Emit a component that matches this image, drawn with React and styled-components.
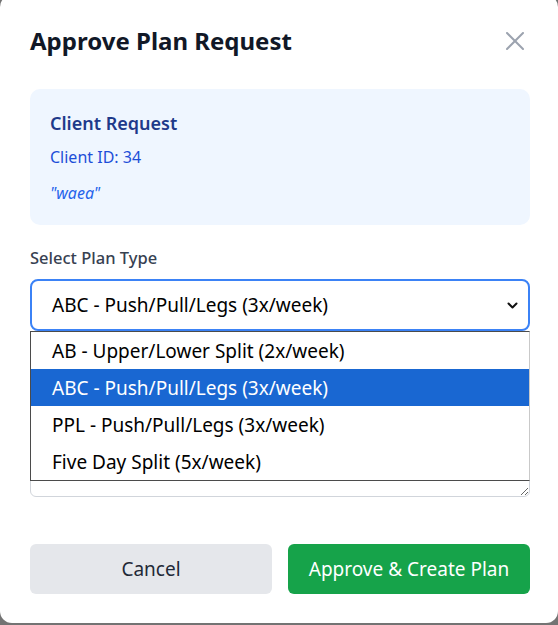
import React from 'react';
import styled, { createGlobalStyle } from 'styled-components';

const planOptions = [
  'AB - Upper/Lower Split (2x/week)',
  'ABC - Push/Pull/Legs (3x/week)',
  'PPL - Push/Pull/Legs (3x/week)',
  'Five Day Split (5x/week)',
];

function App() {
  const selected = planOptions[1];
  return (
    <>
      <GlobalStyle />
      <Overlay>
        <Modal>
          <Header>
            <Title>Approve Plan Request</Title>
            <CloseButton aria-label="Close">
              <svg width="18" height="18" viewBox="0 0 18 18" fill="none">
                <path d="M1 1L17 17M17 1L1 17" stroke="#9ca3af" strokeWidth="2" strokeLinecap="round" />
              </svg>
            </CloseButton>
          </Header>

          <InfoBox>
            <InfoTitle>Client Request</InfoTitle>
            <InfoLine>Client ID: 34</InfoLine>
            <Quote>"waea"</Quote>
          </InfoBox>

          <Field>
            <Label>Select Plan Type</Label>
            <SelectWrap>
              <SelectBox>
                <span>{selected}</span>
                <svg width="11" height="7" viewBox="0 0 11 7" fill="none">
                  <path d="M1.5 1.5L5.5 5.5L9.5 1.5" stroke="#111" strokeWidth="2" strokeLinecap="round" strokeLinejoin="round" />
                </svg>
              </SelectBox>
              <Listbox>
                {planOptions.map((opt) => (
                  <Option key={opt} $active={opt === selected}>
                    {opt}
                  </Option>
                ))}
              </Listbox>
            </SelectWrap>
          </Field>

          <Notes aria-label="Notes" />

          <Footer>
            <Button>Cancel</Button>
            <Button $primary>Approve &amp; Create Plan</Button>
          </Footer>
        </Modal>
      </Overlay>
    </>
  );
}

export default App;

const GlobalStyle = createGlobalStyle`
  html, body {
    margin: 0;
    padding: 0;
    background: #737373;
    overflow: hidden;
  }
  * {
    box-sizing: border-box;
  }
  body {
    font-family: "Noto Sans", "Open Sans", sans-serif;
  }
`;

const Overlay = styled.div`
  width: 558px;
  height: 625px;
  overflow: hidden;
`;

const Modal = styled.div`
  margin-top: -5px;
  width: 558px;
  height: 628px;
  background: #fff;
  border-radius: 12px;
  padding: 30px 28px 29px 30px;
`;

const Header = styled.div`
  display: flex;
  justify-content: space-between;
  align-items: center;
  margin-bottom: 32px;
`;

const Title = styled.h2`
  margin: 0;
  font-size: 24px;
  line-height: 32px;
  font-weight: 700;
  color: #111827;
`;

const CloseButton = styled.button`
  border: none;
  background: none;
  padding: 0;
  margin-right: 6px;
  display: flex;
`;

const InfoBox = styled.div`
  background: #eff6ff;
  border-radius: 10px;
  padding: 20px;
  margin-bottom: 21px;
`;

const InfoTitle = styled.h3`
  margin: 0 0 8px;
  font-size: 18px;
  line-height: 28px;
  font-weight: 600;
  color: #1e3a8a;
`;

const InfoLine = styled.p`
  margin: 0;
  font-size: 16px;
  line-height: 24px;
  color: #1d4ed8;
`;

const Quote = styled.p`
  margin: 12px 0 0;
  font-size: 16px;
  line-height: 24px;
  font-style: italic;
  color: #2563eb;
`;

const Field = styled.div`
  margin-bottom: 20px;
`;

const Label = styled.label`
  display: block;
  font-size: 16.5px;
  line-height: 24px;
  font-weight: 500;
  color: #374151;
  margin-bottom: 9px;
`;

const SelectWrap = styled.div`
  position: relative;
`;

const SelectBox = styled.div`
  display: flex;
  align-items: center;
  justify-content: space-between;
  height: 52px;
  padding: 0 10px 0 20px;
  border: 2px solid #3b82f6;
  border-radius: 8px;
  font-size: 19px;
  color: #000;
`;

const Listbox = styled.div`
  position: absolute;
  top: 100%;
  left: 0;
  right: 0;
  z-index: 2;
  background: #fff;
  border: 1px solid #4b4b4b;
  border-right-color: #c9c9c9;
`;

const Option = styled.div`
  height: 37px;
  display: flex;
  align-items: center;
  padding-left: 21px;
  font-size: 19px;
  color: ${(p) => (p.$active ? '#fff' : '#000')};
  background: ${(p) => (p.$active ? '#1967d2' : 'transparent')};
`;

const Notes = styled.textarea`
  display: block;
  width: 100%;
  height: 116px;
  margin-top: 50px;
  border: 1px solid #d1d5db;
  border-radius: 6px;
  resize: vertical;
  font-family: inherit;
`;

const Footer = styled.div`
  display: grid;
  grid-template-columns: 1fr 1fr;
  gap: 16px;
  margin-top: 47px;
`;

const Button = styled.button`
  height: 50px;
  border: none;
  border-radius: 6px;
  font-family: inherit;
  font-size: 19px;
  background: ${(p) => (p.$primary ? '#16a34a' : '#e5e7eb')};
  color: ${(p) => (p.$primary ? '#fff' : '#1f2937')};
`;
